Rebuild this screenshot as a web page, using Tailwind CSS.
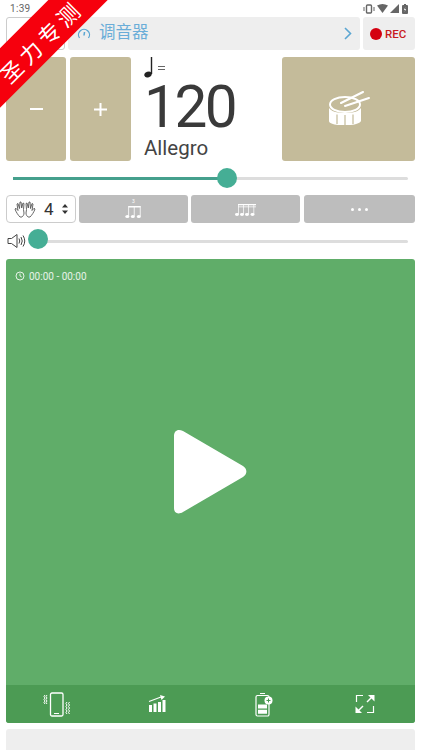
<!doctype html>
<html>
<head>
<meta charset="utf-8">
<script src="https://cdn.jsdelivr.net/npm/@tailwindcss/browser@4"></script>
</head>
<body class="bg-white">
<div class="relative w-[421px] h-[750px] overflow-hidden bg-white font-['Roboto','Noto_Sans_CJK_SC',sans-serif]">
  <!-- status bar -->
  <div class="h-[17px] pl-[10px] pr-[13px] flex items-center justify-between text-[#666]">
    <span class="text-[10px] leading-none tracking-[.3px]">1:39</span>
    <div class="flex items-center gap-[2px]">
      <svg width="12" height="10" viewBox="0 0 12 10" fill="none" stroke="#666"><rect x="3.500" y="1" width="5" height="8" rx="1" stroke-width="1.400"/><path d="M1 3v4M11 3v4" stroke-width="1"/></svg>
      <svg width="11" height="9" viewBox="0 0 11 9" fill="#666"><path d="M0 1.500Q5.500-1.500 11 1.500L5.500 9z"/></svg>
      <svg width="9" height="9" viewBox="0 0 9 9" fill="#666"><path d="M9 0v9H0z"/></svg>
      <svg width="6" height="10" viewBox="0 0 6 10" class="ml-[1px]"><rect y="1" width="6" height="9" rx="1" fill="#666"/><rect x="2" width="2" height="1" fill="#666"/><path d="M3.300 3L2 6h1L2.700 8 4 5H3z" fill="#fff"/></svg>
    </div>
  </div>

  <div class="px-[6px]">
    <!-- top row -->
    <div class="flex h-[33px] gap-[3px]">
      <div class="w-[59px] h-[33px] rounded-[3px] border border-[#ccc] bg-white"></div>
      <div class="w-[292px] flex items-center bg-[#eeeeee] rounded-[3px] pl-[9px] pr-[8px]">
        <svg width="14" height="14" viewBox="0 0 14 14" fill="none" stroke="#5ba6d2" stroke-width="1.300"><path d="M2.500 11A5.500 5.500 0 1 1 11.500 11"/><path d="M7 8.500L7.500 5" stroke-width="1.500"/></svg>
        <span class="ml-[8px] text-[16.500px] leading-none text-[#6aadd8]">调音器</span>
        <svg class="ml-auto" width="8" height="13" viewBox="0 0 8 13" fill="none" stroke="#5ba6d2" stroke-width="1.600"><path d="M1 1l5.500 5.500L1 12"/></svg>
      </div>
      <div class="w-[52px] flex items-center pl-[7px] gap-[3px] bg-[#eeeeee] rounded-[3px]">
        <span class="w-[12px] h-[12px] rounded-full bg-[#d40010]"></span>
        <span class="text-[11.500px] leading-[12px] font-medium text-[#c81a20]">REC</span>
      </div>
    </div>

    <!-- tempo row -->
    <div class="flex h-[104px] mt-[7px]">
      <div class="w-[60px] rounded-[3px] bg-[#c4bb9a] flex items-center justify-center">
        <span class="w-[13px] h-[2.500px] bg-white"></span>
      </div>
      <div class="w-[61px] ml-[4px] rounded-[3px] bg-[#c4bb9a] flex items-center justify-center">
        <svg width="13" height="13" viewBox="0 0 13 13" fill="#fff"><path d="M5.500 0h2v5.500H13v2H7.500V13h-2V7.500H0v-2h5.500z"/></svg>
      </div>
      <div class="w-[151px] pl-[13px] relative">
        <div class="flex items-start h-[22px] text-[#333]">
          <svg width="10" height="21" viewBox="0 0 10 21" fill="#222"><ellipse cx="4" cy="17.500" rx="3.800" ry="2.800" transform="rotate(-20 4 17.500)"/><rect x="6.800" y="0" width="1.400" height="17"/></svg>
          <span class="w-[7px] h-[4px] mt-[9px] ml-[4px] border-y border-[#666]"></span>
        </div>
        <div class="text-[58.500px] leading-[60px] mt-[-2px] text-[#3a3a3a] tracking-[-2.500px]">120</div>
        <div class="text-[20.500px] leading-[24px] mt-[-1px] text-[#444]">Allegro</div>
      </div>
      <div class="w-[133px] rounded-[3px] bg-[#c4bb9a] flex items-center justify-center">
        <svg width="42" height="34" viewBox="0 0 42 34" class="mt-[-2px]" fill="none">
          <path d="M1 17v13c0 2 4 3.500 9 4h13c5-.5 9-2 10-4V17c-2 3-7 5-16 5S3 20 1 17z" fill="#fff"/>
          <path d="M9 23.500V33M17 24v10M25 23.500V33" stroke="#c4bb9a" stroke-width="1.200"/>
          <ellipse cx="17" cy="13.500" rx="15" ry="7.500" stroke="#fff" stroke-width="2"/>
          <path d="M13 12L35 1M17 15L41 7" stroke="#fff" stroke-width="2" stroke-linecap="round"/>
        </svg>
      </div>
    </div>

    <!-- tempo slider -->
    <div class="relative h-[34px] ml-[7px] mr-[7px] flex items-center">
      <div class="h-[3px] w-full rounded-full bg-[#dddddd]">
        <div class="h-full w-[214px] bg-[#45a08d]"></div>
      </div>
      <span class="absolute left-[204px] top-[7px] w-[20px] h-[20px] rounded-full bg-[#45ae95]"></span>
    </div>

    <!-- beat row -->
    <div class="flex h-[28px]">
      <div class="w-[70px] rounded-[4px] border border-[#ccc] flex items-center pl-[7px]">
        <svg width="22" height="20" viewBox="0 0 22 20" fill="none" stroke="#555" stroke-width=".9"><path d="M6 18C4 16 2 13 1 10l1-.7 2 2.200L3 5l1-.5 1.500 5L6 3h1l.7 6L9 4l1 .5-.5 6 .5 3.500c0 2-1 3-2 4zM16 18c2-2 4-5 5-8l-1-.7-2 2.200L19 5l-1-.5-1.500 5L16 3h-1l-.7 6L13 4l-1 .5.500 6-.5 3.500c0 2 1 3 2 4z"/></svg>
        <span class="ml-[8px] text-[17px] leading-none text-[#333]">4</span>
        <svg class="ml-[8px]" width="6" height="12" viewBox="0 0 6 12" fill="#333"><path d="M3 1L6 4.500H0zM3 11L0 7.500h6z"/></svg>
      </div>
      <div class="w-[109px] ml-[3px] rounded-[3px] bg-[#bdbdbd] flex items-center justify-center">
        <svg width="17" height="20" viewBox="0 0 17 20" fill="#fff"><text x="7" y="4" font-size="5" font-family="Roboto">3</text><path d="M3.500 7h12v1.500h-12z"/><path d="M3.300 7h.8v10h-.8zM8.800 7h.8v10h-.8zM14.800 7h.8v10h-.8z"/><ellipse cx="2.300" cy="17.500" rx="2" ry="1.500"/><ellipse cx="7.800" cy="17.500" rx="2" ry="1.500"/><ellipse cx="13.800" cy="17.500" rx="2" ry="1.500"/></svg>
      </div>
      <div class="w-[109px] ml-[3px] rounded-[3px] bg-[#bdbdbd] flex items-center justify-center">
        <svg width="21" height="13" viewBox="0 0 21 13" fill="#fff"><path d="M3 1h18v1.200H3zM3 3.500h18v.7H3z"/><path d="M3 1h.7v10H3zM8 1h.7v10H8zM13 1h.7v10h-.7zM18.500 1h.7v10h-.7z"/><ellipse cx="2" cy="11.500" rx="2" ry="1.400"/><ellipse cx="7" cy="11.500" rx="2" ry="1.400"/><ellipse cx="12" cy="11.500" rx="2" ry="1.400"/><ellipse cx="17.500" cy="11.500" rx="2" ry="1.400"/></svg>
      </div>
      <div class="w-[111px] ml-[4px] rounded-[3px] bg-[#bdbdbd] flex items-center justify-center gap-[4px]">
        <span class="w-[3px] h-[3px] rounded-full bg-white"></span>
        <span class="w-[3px] h-[3px] rounded-full bg-white"></span>
        <span class="w-[3px] h-[3px] rounded-full bg-white"></span>
      </div>
    </div>

    <!-- volume -->
    <div class="relative h-[36px] flex items-center">
      <svg class="ml-[1px]" width="19" height="16" viewBox="0 0 19 16" fill="none" stroke="#444" stroke-width="1"><path d="M1 5.500h3.500L10 1.500v13L4.500 10.500H1z"/><path d="M12 5.500q1.500 2.500 0 5M14 4q2.500 4 0 8M16 2.500q3.500 5.500 0 11"/></svg>
      <div class="ml-[5px] h-[3px] w-[377px] rounded-full bg-[#dddddd]"></div>
      <span class="absolute left-[22px] top-[6px] w-[20px] h-[20px] rounded-full bg-[#45ae95]"></span>
    </div>

    <!-- player card -->
    <div class="h-[464px] rounded-[3px] bg-[#60ad69] flex flex-col overflow-hidden">
      <div class="flex items-center h-[34px] pl-[9px] text-white/85">
        <svg width="10" height="10" viewBox="0 0 10 10" fill="none" stroke="#e6f2e7" stroke-width="1"><circle cx="5" cy="5" r="4"/><path d="M5 2.500V5l1.800 1"/></svg>
        <span class="ml-[4px] text-[10px]">00:00 - 00:00</span>
      </div>
      <div class="flex-1 flex items-center justify-center">
        <svg width="74" height="86" viewBox="0 0 74 86" class="mt-[-34px] ml-[-2px]" fill="#fff"><path d="M1 7C1 1.500 5 -.5 10 2L70 37C74.500 40 74.500 45 70 48L10 83C5 86 1 84 1 79z"/></svg>
      </div>
      <div class="h-[38px] bg-[#4c9b54] flex items-center">
        <div class="flex-1 flex justify-center pl-[1px]">
          <svg width="28" height="25" viewBox="0 0 28 25" fill="none" stroke="#fff"><rect x="7.500" y="1" width="12.500" height="23" rx="1.500" stroke-width="1.300"/><path d="M11 21.500h5" stroke-width="1.200"/><path d="M2 3l-1 1.500L2 6 1 7.500 2 9 1 10.500 2 12M4 3L3 4.500 4 6 3 7.500 4 9 3 10.500 4 12M24 10l-1 1.500 1 1.500-1 1.500 1 1.500-1 1.500 1 1.500 -1 1.500 1 1.500M26.500 10l-1 1.500 1 1.500-1 1.500 1 1.500-1 1.500 1 1.500-1 1.500 1 1.500" stroke-width="1"/></svg>
        </div>
        <div class="flex-1 flex justify-center pr-[1px]">
          <svg width="18" height="18" viewBox="0 0 18 18" fill="#fff"><path d="M1 10h3v7H1zM5.500 8.500h3V17h-3zM10 7h3v10h-3zM14.500 5h3v12h-3z"/><path d="M1 6.500L13 2" stroke="#fff" stroke-width="1.200" fill="none"/><path d="M12 0l5 1.500-3.500 3.500z"/></svg>
        </div>
        <div class="flex-1 flex justify-center pl-[5px]">
          <svg width="18" height="25" viewBox="0 0 18 25" fill="none"><path d="M5 1.500h5M2.500 3.500h10A1.500 1.500 0 0 1 14 5v17.500A1.500 1.500 0 0 1 12.500 24h-10A1.500 1.500 0 0 1 1 22.500V5a1.500 1.500 0 0 1 1.500-1.500z" stroke="#fff" stroke-width="1.200"/><path d="M3 12.500h9v4H3zM3 17.800h9v4H3z" fill="#fff"/><circle cx="13.500" cy="8.500" r="4" fill="#fff"/><path d="M11.500 8.500h4M13.500 6.500v4" stroke="#4c9b54" stroke-width="1"/></svg>
        </div>
        <div class="flex-1 flex justify-center pl-[1px]">
          <svg width="20" height="20" viewBox="0 0 20 20" fill="none" stroke="#fff" stroke-width="1.200"><path d="M8 1.500H1.500V8M18.500 12v6.500H12"/><path d="M12 8l6.500-6.500" stroke-width="1.500"/><path d="M13 1h6.500v6.500z" fill="#fff" stroke="none"/><path d="M8 12L1.500 18.500" stroke-width="1.500"/><path d="M7 19H.5v-6.500z" fill="#fff" stroke="none"/></svg>
        </div>
      </div>
    </div>

    <!-- ad placeholder -->
    <div class="h-[30px] mt-[6px] rounded-[3px] bg-[#eeeeee]"></div>
  </div>

  <!-- ribbon -->
  <div class="absolute left-[-61px] top-[18px] w-[200px] h-[42px] pt-[4px] -rotate-45 bg-[#f6000d] flex items-center justify-center text-white text-[22px] leading-none tracking-[4.500px] font-['Noto_Sans_CJK_SC',sans-serif]">圣力专测</div>
</div>
</body>
</html>
